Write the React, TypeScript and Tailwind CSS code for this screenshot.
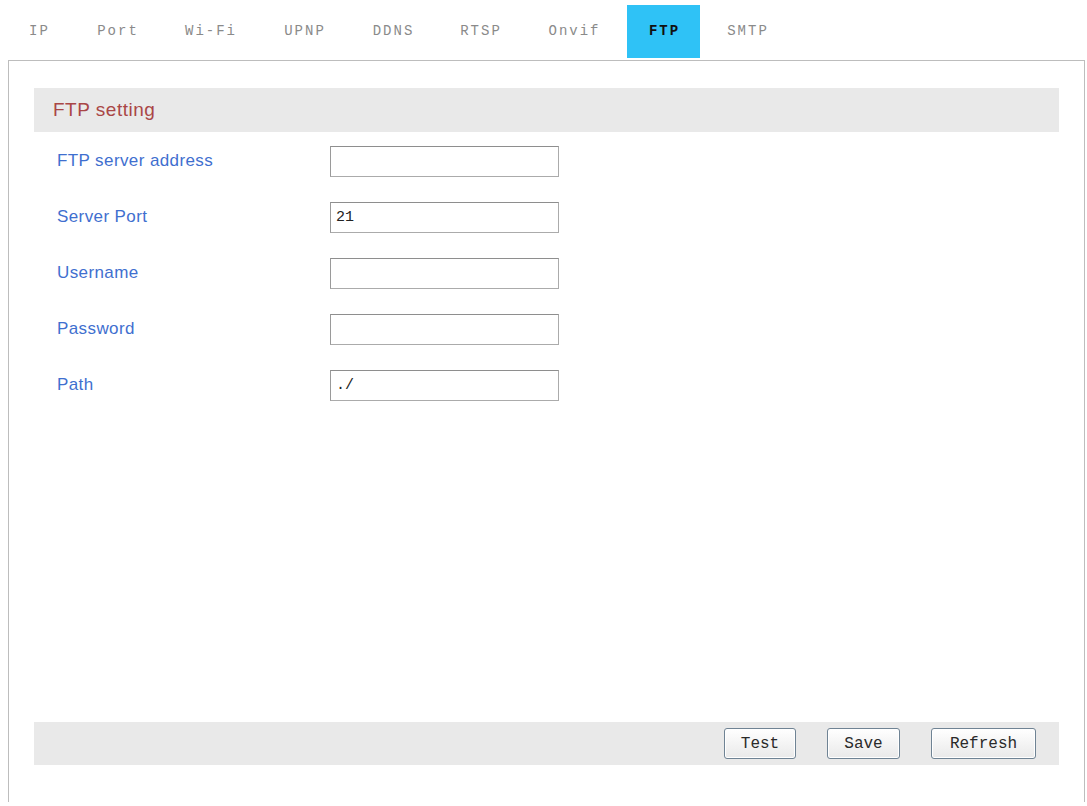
import { useState } from "react";

// box widths keep each label centred where the reference has it
const TABS = [
  { label: "IP", w: "w-[77px]" },
  { label: "Port", w: "w-[80px]" },
  { label: "Wi-Fi", w: "w-[106px]" },
  { label: "UPNP", w: "w-[82px]" },
  { label: "DDNS", w: "w-[95px]" },
  { label: "RTSP", w: "w-[80px]" },
  { label: "Onvif", w: "w-[107px]" },
  { label: "FTP", w: "w-[73px]" },
  { label: "SMTP", w: "w-[94px]" },
];

const FIELDS = [
  { label: "FTP server address", value: "" },
  { label: "Server Port", value: "21" },
  { label: "Username", value: "" },
  { label: "Password", value: "" },
  { label: "Path", value: "./" },
];

function Tabs({ active, onPick }: { active: string; onPick: (t: string) => void }) {
  return (
    <nav className="flex pt-[5px]">
      {TABS.map((t) => (
        <button
          key={t.label}
          onClick={() => onPick(t.label)}
          className={
            (t.label === active
              ? "bg-[#2fc2f6] font-bold text-[#111] "
              : "text-[#8a8a8a] ") +
            "flex h-[53px] items-center justify-center pl-[2px] font-['Liberation_Mono',monospace] text-[14px] tracking-[2px] " +
            t.w
          }
        >
          {t.label}
        </button>
      ))}
    </nav>
  );
}

function Field({ label, value }: { label: string; value: string }) {
  const [v, setV] = useState(value);
  return (
    <div className="flex h-[56px] items-center">
      <label className="w-[296px] pl-[23px] font-['Liberation_Sans',Arial,sans-serif] text-[17px] tracking-[0.4px] text-[#3f6fcf]">
        {label}
      </label>
      <input
        type={label === "Password" ? "password" : "text"}
        value={v}
        onChange={(e) => setV(e.target.value)}
        className="h-[31px] w-[229px] border border-[#ababab] border-t-[#8e8e8e] border-l-[#9a9a9a] bg-white px-[5px] font-['Liberation_Mono',monospace] text-[15px] text-[#222] outline-none"
      />
    </div>
  );
}

function Btn({ children, w }: { children: string; w: string }) {
  return (
    <button
      className={
        "h-[31px] rounded-[3px] border border-[#6f8394] bg-gradient-to-b from-white to-[#e9e9e9] font-['Liberation_Mono',monospace] text-[16px] text-[#2a2a2a] shadow-[inset_0_0_0_1px_#fff] " +
        w
      }
    >
      {children}
    </button>
  );
}

export default function App() {
  const [tab, setTab] = useState("FTP");

  return (
    <div className="h-[806px] w-[1087px] overflow-hidden bg-white">
      <Tabs active={tab} onPick={setTab} />

      <main className="ml-[8px] mt-[2px] flex h-[742px] w-[1077px] flex-col border-x border-t border-[#bdbdbd] px-[25px] pt-[27px]">
        <div className="flex h-[44px] items-center bg-[#e9e9e9] pl-[19px] font-['Liberation_Sans',Arial,sans-serif] text-[19px] tracking-[0.5px] text-[#a94646]">
          FTP setting
        </div>

        <div className="pt-[1px]">
          {FIELDS.map((f) => (
            <Field key={f.label} label={f.label} value={f.value} />
          ))}
        </div>

        <div className="mb-[37px] mt-auto flex h-[43px] items-center justify-end gap-[31px] bg-[#e9e9e9] pr-[23px]">
          <Btn w="w-[72px]">Test</Btn>
          <Btn w="w-[73px]">Save</Btn>
          <Btn w="w-[105px]">Refresh</Btn>
        </div>
      </main>
    </div>
  );
}
